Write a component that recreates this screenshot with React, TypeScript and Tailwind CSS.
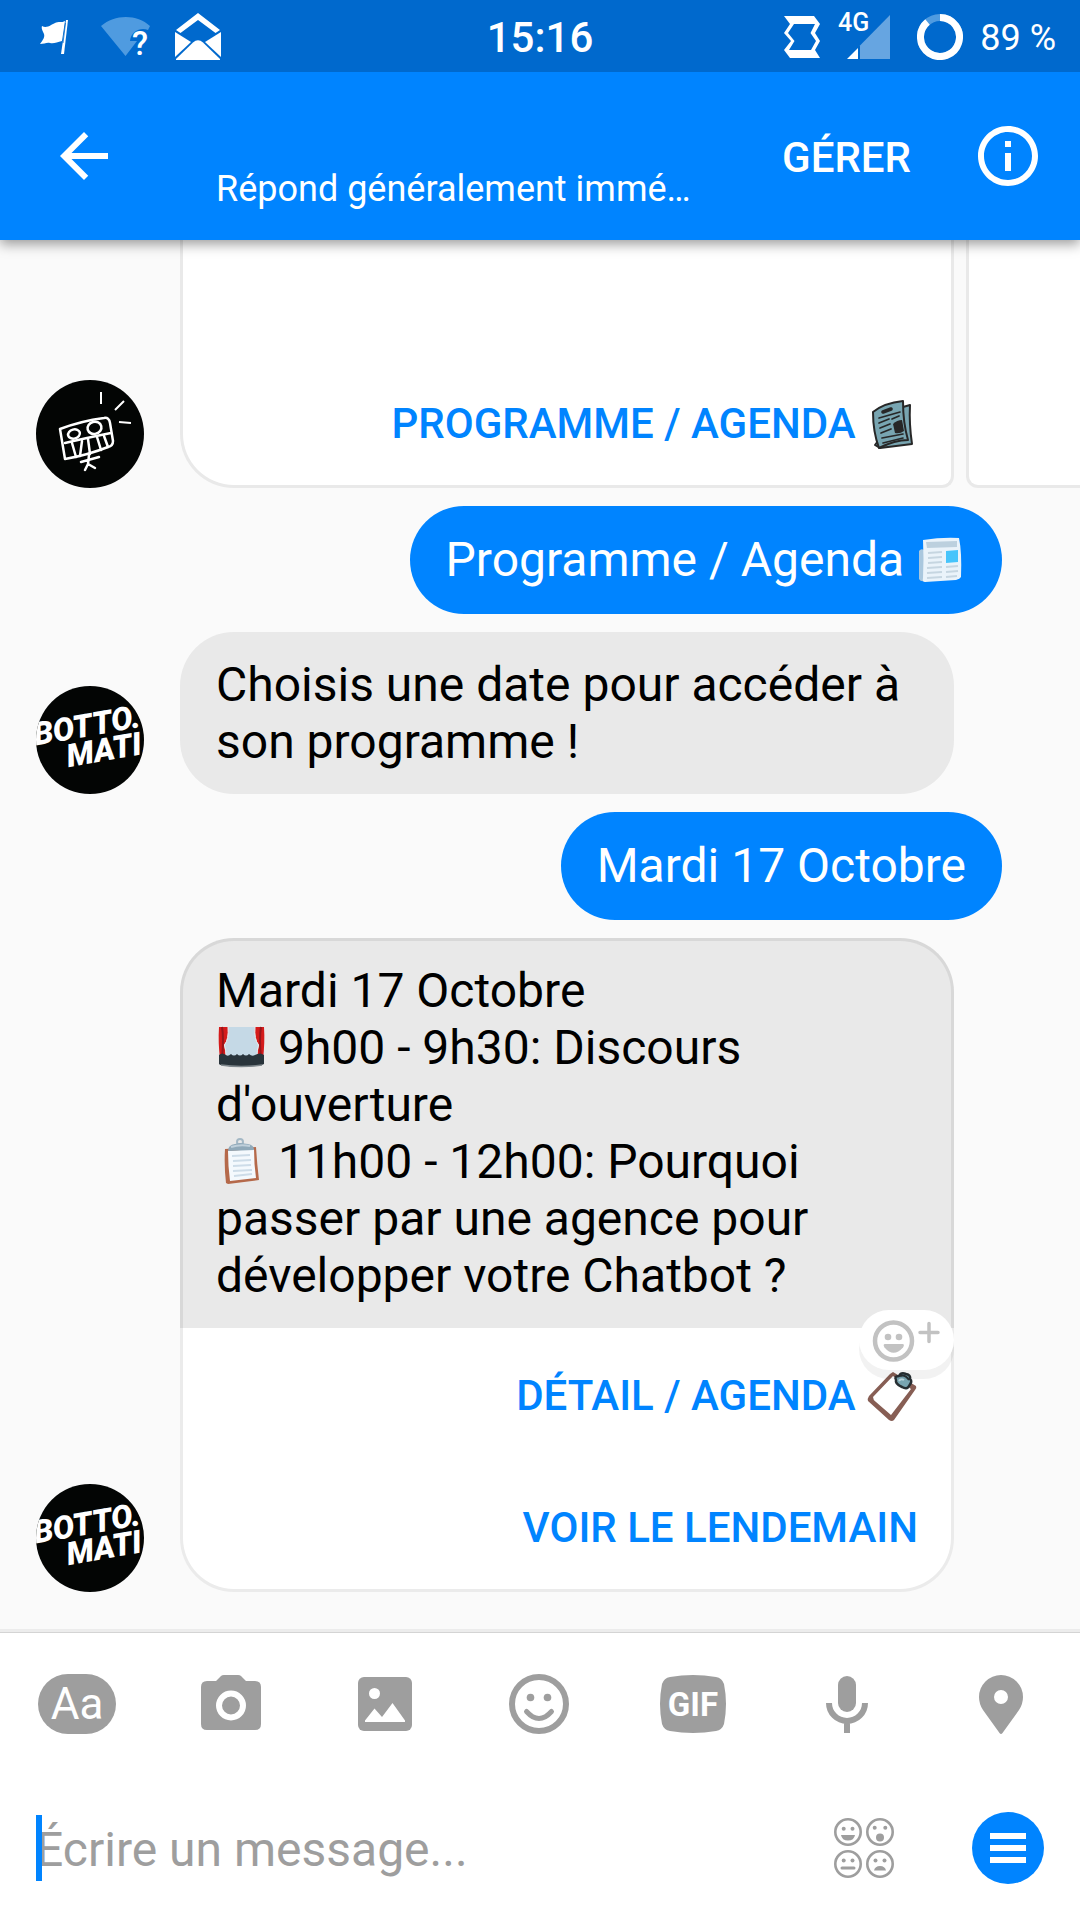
import type { ReactNode } from "react";

/* ---------- Status bar icons ---------- */

function FlagIcon() {
  return (
    <svg className="h-[36px] w-[28px]" viewBox="0 0 28 36" fill="#fff" aria-hidden="true">
      <path d="M2 7 C7 10 12 5 15 4 C18 2 22 4 25 2 L22 22 C17 23 14 25 10 24 C7 23 4 25 0 25 C3 21 5 18 4 15 C3 12 1 10 2 7Z" />
      <path d="M26 1 L28 1 L24 35 L21 35Z" />
      <path d="M25.500 4 L23 24" stroke="#0069cd" strokeWidth="0.8" />
    </svg>
  );
}

function WifiUnknownIcon() {
  return (
    <svg className="h-[40px] w-[50px] overflow-visible" viewBox="0 0 50 40" aria-hidden="true">
      <path
        d="M0 9 C14 -3 36 -3 49 9 L47 13 C40 10 30 14 29 24 H36 L24.500 39Z"
        fill="#4f9be0"
      />
      <text x="31" y="38" fontFamily="Roboto, sans-serif" fontSize="33" fontWeight="500" fill="#fff">
        ?
      </text>
    </svg>
  );
}

function OpenMailIcon() {
  return (
    <svg className="h-[48px] w-[46px]" viewBox="0 0 46 48" fill="#fff" aria-hidden="true">
      <path d="M23 0 L45 17 L40.500 20 L23 7 L5.500 20 L1 17Z" />
      <path d="M0 19 L16 29 L0 44Z" />
      <path d="M46 19 L30 29 L46 44Z" />
      <path d="M1 46 L18 29.500 Q23 25 28 29.500 L45 46 V47 H1Z" />
    </svg>
  );
}

function HourglassIcon() {
  return (
    <svg className="h-[42px] w-[36px]" viewBox="0 0 36 42" fill="#fff" aria-hidden="true">
      <path
        fillRule="evenodd"
        d="M0 0 H30 L36 8 L31 17 L36 25 L31 34 L36 42 H6 L0 34 L7 25 L0 17 L6 8Z M10 8 L4 17 L10.500 25 L5 34 H27 L32 25 L26.500 17 L31 8Z"
      />
    </svg>
  );
}

function SignalIcon() {
  return (
    <svg className="h-[46px] w-[52px] overflow-visible" viewBox="0 0 52 46" aria-hidden="true">
      <path d="M52 1 V45 H22 V31.500Z" fill="#66a5e1" />
      <path d="M20 34 V45 H9Z" fill="#fff" />
      <text x="0" y="17" fontFamily="Roboto, sans-serif" fontSize="25" fontWeight="500" fill="#fff">
        4G
      </text>
    </svg>
  );
}

function BatteryRing() {
  return (
    <svg className="h-[46px] w-[46px]" viewBox="0 0 46 46" fill="none" strokeWidth="7" aria-hidden="true">
      <circle cx="23" cy="23" r="19.500" stroke="#4f9be0" />
      <path d="M23 3.500 A19.500 19.500 0 1 1 10.500 8" stroke="#fff" />
    </svg>
  );
}

/* ---------- Emoji ---------- */

function InkNewspaper() {
  return (
    <svg className="inline h-[52px] w-[52px] align-[-12px]" viewBox="0 0 52 52" role="img" aria-label="journal" strokeLinejoin="round" strokeLinecap="round">
      <path d="M37 9 L44 7 Q43 26 46 46 L14 50 L9 47Z" fill="#78a5b1" stroke="#272727" strokeWidth="2" />
      <path d="M7 14 Q18 5 37 3 Q37 25 42 42 Q29 42 13 50 Q7 34 7 14Z" fill="#78a5b1" stroke="#272727" strokeWidth="2" />
      <path d="M17 14 L25 11" stroke="#272727" strokeWidth="3.500" />
      <path d="M13 20 L34 14 M13 25 L23 21 M14 30 L24 26 M15 35 L25 31 M16 40 L37 36 M17 45 L37 40 M26 21 L33 18" stroke="#272727" strokeWidth="1.700" />
      <path d="M27 26 Q31 22 36 22 L38 33 Q34 36 29 35Z" fill="#272727" />
    </svg>
  );
}

function InkClipboard() {
  return (
    <svg className="inline h-[52px] w-[52px] align-[-12px]" viewBox="0 0 52 52" role="img" aria-label="presse-papiers" strokeLinejoin="round">
      <path fillRule="evenodd" d="M27 2 L50 16 Q51 18 49 20 L28 50 Q26 52 23 50 L2 31 Q1 29 3 26 L24 4Z M27 6 L7 27 Q7 30 10 32 L25 45 L45 19Z" fill="#875e54" />
      <path d="M30 10 Q28 6 33 6 Q35 2 40 4 Q45 5 44 9 Q47 11 43 16 Q41 20 36 17 Q29 14 30 10Z" fill="#78a5b1" stroke="#272f33" strokeWidth="2.500" />
      <path d="M34 6 Q39 4 43 10" fill="none" stroke="#272f33" strokeWidth="2" />
      <path d="M33 11 Q35 8 38 10" fill="none" stroke="#b9d4dc" strokeWidth="2" />
    </svg>
  );
}

function ColorNewspaper() {
  return (
    <svg className="inline h-[50px] w-[50px] align-[-8px]" viewBox="0 0 50 50" role="img" aria-label="journal">
      <path d="M3 17 Q5 14 8 16 L12 46 Q5 49 3 45Z" fill="#a9c7de" />
      <path d="M7 6 Q26 3 43 4 Q46 18 45 43 Q44 45 40 46 L9 48 Q6 48 7 44 Q8 25 7 6Z" fill="#eaf3fa" />
      <path d="M10 8 L41 7 L41 13 L11 14Z" fill="#bcd0de" />
      <path d="M30 17 L42 16 L42 28 L30 29Z" fill="#46c4fb" />
      <path d="M12 19 L26 18 M12 24 L26 23 M12 29 L26 28 M11 34 L26 33 M11 39 L26 38 M11 44 L26 43 M30 33 L42 32 M30 38 L42 37 M30 43 L41 42" stroke="#c6d6e1" strokeWidth="2" />
    </svg>
  );
}

function StageEmoji() {
  return (
    <svg className="inline h-[50px] w-[50px] align-[-8px]" viewBox="0 0 50 50" role="img" aria-label="scène">
      <path d="M4 5 H48 V37 H4Z" fill="#c5d9e6" />
      <path d="M3 5 H12 Q13 17 8 23 Q10 29 10 37 H4 Q2 20 3 5Z" fill="#d41b1b" />
      <path d="M48 5 H39 Q38 17 43 23 Q41 29 41 37 H47 Q49 20 48 5Z" fill="#d41b1b" />
      <path d="M6 5 Q8 16 6 36 M45 5 Q43 16 45 36" stroke="#97151a" strokeWidth="2" fill="none" />
      <path d="M12 5 Q13 17 8.500 23 Q10 29 10 34 M39 5 Q38 17 42.500 23 Q41 29 41 34" stroke="#e9eef0" strokeWidth="1" fill="none" />
      <path d="M3 33 Q6 30 10 33 Q12 35 15 32 Q18 35 21 32 Q24 35 27 32 Q30 35 33 32 Q36 35 39 33 Q44 30 48 33 V42 Q46 44 25 45 Q4 44 3 42Z" fill="#29343b" />
      <path d="M5 43 Q25 46 46 43" stroke="#7e878c" strokeWidth="1.500" fill="none" />
    </svg>
  );
}

function ClipboardEmoji() {
  return (
    <svg className="inline h-[50px] w-[50px] align-[-8px]" viewBox="0 0 50 50" role="img" aria-label="presse-papiers">
      <path d="M9 13 L40 11 Q41 28 43 44 L12 48 L10 47 Q8 30 9 13Z" fill="#b5694a" />
      <path d="M12 15 L38 13 Q38 28 40 42 L14 45 Q12 30 12 15Z" fill="#f4f9fd" />
      <path d="M16 20 L34 19 M17 25 L35 24 M17 30 L35 29 M17 35 L36 34 M18 40 L36 38" stroke="#cddce8" strokeWidth="2" />
      <circle cx="24" cy="6" r="3" fill="none" stroke="#a4b8c5" strokeWidth="2" />
      <path d="M12 15 Q12 9 19 8 L24 7 L32 8 Q38 9 38 14Z" fill="#90a9b9" />
      <path d="M15 11 Q24 8 34 10" stroke="#c0d0db" strokeWidth="2" fill="none" />
    </svg>
  );
}

/* ---------- Avatars ---------- */

function RobotAvatar() {
  return (
    <svg className="size-[108px] shrink-0" viewBox="0 0 108 108" role="img" aria-label="Robot" fill="none" stroke="#fff" strokeWidth="2.500" strokeLinecap="round" strokeLinejoin="round">
      <circle cx="54" cy="54" r="54" fill="#030504" stroke="none" />
      <path d="M24 49 Q45 41 68 38 Q73 37 74 43 L77 61 Q77 66 72 67 Q52 75 29 79Z" />
      <path d="M29 63 Q50 58 75 53" />
      <path d="M36 63 L40 77 M46 61 L44 76 M52 59 L54 74 M61 57 L65 70 M68 56 L72 67" />
      <ellipse cx="38" cy="54" rx="6" ry="4.500" transform="rotate(-15 38 54)" />
      <ellipse cx="58.500" cy="48" rx="7" ry="6" transform="rotate(-15 58 48)" />
      <path d="M53 75 L52 84 L49 90 M52 84 L59 88 M45 82 L63 77" />
      <path d="M65 12 V24 M88 21 L79 30 M83 42 L95 43" strokeLinecap="butt" strokeWidth="2" />
    </svg>
  );
}

function BottoAvatar() {
  return (
    <div className="size-[108px] shrink-0 overflow-hidden rounded-full bg-[#030504]">
      <svg className="size-full" viewBox="0 0 108 108" role="img" aria-label="Bottomatin" fill="#fff" fontFamily="Roboto, sans-serif" fontWeight="900" fontStyle="italic" fontSize="32">
        <g transform="rotate(-10 54 54)">
          <text x="-1" y="50">BOTTO.</text>
          <text x="28" y="77">MATI.</text>
        </g>
      </svg>
    </div>
  );
}

/* ---------- Composer icons ---------- */

const GREY = "#9e9e9e";

function CameraIcon() {
  return (
    <svg className="size-[60px]" viewBox="0 0 60 60" aria-hidden="true">
      <path d="M6 7 H15 L20 2 Q21 1 23 1 H37 Q39 1 40 2 L45 7 H54 Q60 7 60 13 V50 Q60 56 54 56 H6 Q0 56 0 50 V13 Q0 7 6 7Z" fill={GREY} />
      <circle cx="30" cy="31.500" r="12" fill={GREY} stroke="#fff" strokeWidth="6" />
    </svg>
  );
}

function PhotoIcon() {
  return (
    <svg className="size-[54px]" viewBox="0 0 54 54" aria-hidden="true">
      <rect width="54" height="54" rx="6" fill={GREY} />
      <circle cx="16.500" cy="16.500" r="5.500" fill="#fff" />
      <path d="M7 45 V43.500 L16.500 31.500 L24 40 L34.500 26 L47 43.500 V45Z" fill="#fff" />
    </svg>
  );
}

function SmileIcon() {
  return (
    <svg className="size-[60px]" viewBox="0 0 60 60" aria-hidden="true">
      <circle cx="30" cy="30" r="27" fill="none" stroke={GREY} strokeWidth="6" />
      <circle cx="21.500" cy="23.500" r="3.800" fill={GREY} />
      <circle cx="38.500" cy="23.500" r="3.800" fill={GREY} />
      <path d="M17.500 37.500 Q30 51.500 42.500 37.500" fill="none" stroke={GREY} strokeWidth="5" strokeLinecap="round" />
    </svg>
  );
}

function GifIcon() {
  return (
    <svg className="h-[58px] w-[66px]" viewBox="0 0 66 58" aria-hidden="true">
      <path d="M10 2 Q33 -2 56 2 Q62 3 64 9 Q68 29 64 49 Q62 55 56 56 Q33 60 10 56 Q4 55 2 49 Q-2 29 2 9 Q4 3 10 2Z" fill={GREY} />
      <text x="33" y="41" textAnchor="middle" fontFamily="Roboto, sans-serif" fontWeight="700" fontSize="33" fill="#fff">
        GIF
      </text>
    </svg>
  );
}

function MicIcon() {
  return (
    <svg className="h-[58px] w-[42px]" viewBox="0 0 42 58" aria-hidden="true">
      <rect x="12" y="1" width="18" height="36" rx="9" fill={GREY} />
      <path d="M3 28 A18 18 0 0 0 39 28 M21 46 V58" fill="none" stroke={GREY} strokeWidth="6" />
    </svg>
  );
}

function PinIcon() {
  return (
    <svg className="h-[60px] w-[44px]" viewBox="0 0 44 60" aria-hidden="true">
      <path fillRule="evenodd" d="M22 1 A22 22 0 0 1 44 23 Q44 30 40 36 L23.500 59 Q22 61 20.500 59 L4 36 Q0 30 0 23 A22 22 0 0 1 22 1Z M22 16 A7 7 0 1 0 22 30 A7 7 0 1 0 22 16Z" fill={GREY} />
    </svg>
  );
}

function FacesIcon() {
  return (
    <svg className="size-[60px]" viewBox="0 0 60 60" fill={GREY} aria-hidden="true">
      <g fill="none" stroke={GREY} strokeWidth="2.600">
        <circle cx="14" cy="14" r="12.700" />
        <circle cx="46" cy="14" r="12.700" />
        <circle cx="14" cy="46" r="12.700" />
        <circle cx="46" cy="46" r="12.700" />
      </g>
      <circle cx="9.700" cy="10.700" r="2" />
      <circle cx="18.500" cy="10.700" r="2" />
      <path d="M7 17 H21 Q20 22.500 14 22.500 Q8 22.500 7 17Z" />
      <circle cx="40.700" cy="9.700" r="2" />
      <circle cx="51.300" cy="9.700" r="2" />
      <circle cx="46" cy="19.500" r="4" />
      <circle cx="9.700" cy="42.500" r="2" />
      <circle cx="18.500" cy="42.500" r="2" />
      <rect x="6.500" y="48.500" width="15" height="3" rx="1.500" />
      <circle cx="41.500" cy="42.500" r="2" />
      <circle cx="50.500" cy="42.500" r="2" />
      <path d="M40 52.500 Q41 48 46 48 Q51 48 52 52.500Z" />
    </svg>
  );
}

/* ---------- Messages ---------- */

function Outgoing({ children }: { children: ReactNode }) {
  return (
    <div className="flex justify-end pr-[78px]">
      <p className="flex min-h-[108px] items-center rounded-[54px] bg-[#0084ff] px-9 pb-[2px] text-[48px] leading-[57px] text-white">
        <span>{children}</span>
      </p>
    </div>
  );
}

function Incoming({ avatar, children }: { avatar: ReactNode; children: ReactNode }) {
  return (
    <div className="flex items-end gap-9 pr-[126px] pl-9">
      {avatar}
      <div className="relative min-w-0 flex-1">{children}</div>
    </div>
  );
}

function CardButton({ children }: { children: ReactNode }) {
  return (
    <button type="button" className="flex h-[132px] w-full items-center justify-end px-[33px] pt-[4px] text-right text-[42px] leading-[56px] font-medium text-[#0084ff]">
      <span>{children}</span>
    </button>
  );
}

function Tool({ label, children }: { label: string; children: ReactNode }) {
  return (
    <button type="button" aria-label={label} className="flex h-full flex-1 items-center justify-center">
      {children}
    </button>
  );
}

export default function App() {
  return (
    <div className="flex min-h-screen flex-col bg-[#fafafa] font-['Roboto',sans-serif] text-black">
      <div className="relative z-20 grid h-[72px] grid-cols-[1fr_auto_1fr] items-center bg-[#0069cd] pt-[2px] text-white">
        <div className="flex items-center pl-10">
          <FlagIcon />
          <span className="ml-[33px] flex"><WifiUnknownIcon /></span>
          <span className="ml-6 flex"><OpenMailIcon /></span>
        </div>
        <time className="pt-[2px] text-[42px] leading-[56px] font-medium">15:16</time>
        <div className="flex items-center justify-end pr-6">
          <HourglassIcon />
          <span className="ml-[18px] flex"><SignalIcon /></span>
          <span className="mr-[17px] ml-[27px] flex"><BatteryRing /></span>
          <span className="pt-[2px] text-[36px] leading-[42px]">89 %</span>
        </div>
      </div>

      <header className="relative z-10 flex h-[168px] items-center bg-[#0084ff] pr-9 pl-12 text-white shadow-[0_4px_12px_rgba(0,0,0,0.4)]">
        <button type="button" aria-label="Retour" className="mr-24">
          <svg className="size-[72px]" viewBox="0 0 24 24" fill="#fff" aria-hidden="true">
            <path d="M20 11H7.830l5.590-5.590L12 4l-8 8 8 8 1.410-1.410L7.830 13H20v-2z" />
          </svg>
        </button>
        <div className="flex h-full min-w-0 flex-1 flex-col justify-end pb-[30px]">
          <p className="truncate text-[36px] leading-[42px]">Répond généralement immé…</p>
        </div>
        <button type="button" className="mr-[61px] pt-[4px] text-[42px] leading-[56px] font-medium">GÉRER</button>
        <button type="button" aria-label="Informations">
          <svg className="size-[72px]" viewBox="0 0 24 24" fill="#fff" aria-hidden="true">
            <path d="M11 7h2v2h-2zm0 4h2v6h-2zm1-9C6.480 2 2 6.480 2 12s4.480 10 10 10 10-4.480 10-10S17.520 2 12 2zm0 18c-4.410 0-8-3.590-8-8s3.590-8 8-8 8 3.590 8 8-3.590 8-8 8z" />
          </svg>
        </button>
      </header>

      <main className="flex flex-1 flex-col gap-[18px] overflow-hidden pb-[37px]">
        <div className="flex items-end gap-9 pl-9">
          <RobotAvatar />
          <div className="flex min-w-0 flex-1 gap-3 overflow-hidden">
            <div className="h-[248px] w-[calc(100%-126px)] shrink-0 rounded-br-xl rounded-bl-[54px] border-x-3 border-b-3 border-[#e9e9e9] bg-white pt-[116px]">
              <CardButton>
                PROGRAMME / AGENDA <InkNewspaper />
              </CardButton>
            </div>
            <div className="h-[248px] w-[calc(100%-126px)] shrink-0 rounded-b-xl border-x-3 border-b-3 border-[#e9e9e9] bg-white" />
          </div>
        </div>

        <Outgoing>
          Programme / Agenda <ColorNewspaper />
        </Outgoing>

        <Incoming avatar={<BottoAvatar />}>
          <p className="rounded-[54px] bg-[#e9e9e9] px-9 py-6 text-[48px] leading-[57px]">
            Choisis une date pour accéder à son programme !
          </p>
        </Incoming>

        <Outgoing>Mardi 17 Octobre</Outgoing>

        <Incoming avatar={<BottoAvatar />}>
          <div className="relative rounded-t-[54px] border-x-3 border-t-3 border-[#d8d8d8] bg-[#e9e9e9] px-[33px] pt-[21px] pb-6 text-[48px] leading-[57px]">
            <p>Mardi 17 Octobre</p>
            <p>
              <StageEmoji /> 9h00 - 9h30: Discours d'ouverture
            </p>
            <p>
              <ClipboardEmoji /> 11h00 - 12h00: Pourquoi passer par une agence pour développer votre Chatbot ?
            </p>
            <button
              type="button"
              aria-label="Ajouter une réaction"
              className="absolute -right-[3px] -bottom-[42px] flex h-[60px] w-[95px] items-center justify-center rounded-full bg-white shadow-[0_9px_0_rgba(0,0,0,0.05)]"
            >
              <svg className="h-[60px] w-[95px]" viewBox="0 0 95 60" fill="#c2c2c2" aria-hidden="true">
                <circle cx="34.500" cy="31" r="18.500" fill="none" stroke="#c2c2c2" strokeWidth="4.500" />
                <circle cx="29" cy="27" r="3.300" />
                <circle cx="40" cy="27" r="3.300" />
                <path d="M26 34 H43.500 Q46 34 44 37.500 Q34.500 48 25.500 37.500 Q23.500 34 26 34Z" />
                <path d="M70 13.500 V31.500 M61 22.500 H79" stroke="#c2c2c2" strokeWidth="3.500" strokeLinecap="round" />
              </svg>
            </button>
          </div>
          <div className="h-[264px] rounded-b-[54px] border-x-3 border-b-3 border-[#ebebeb] bg-white">
            <CardButton>
              DÉTAIL / AGENDA <InkClipboard />
            </CardButton>
            <CardButton>VOIR LE LENDEMAIN</CardButton>
          </div>
        </Incoming>
      </main>

      <footer className="border-t-3 border-[#ececec] bg-white">
        <div className="flex h-[144px] border-t border-[#d4d4d4] pr-[2px] pb-[2px]">
          <Tool label="Texte">
            <span className="flex h-[60px] w-[78px] items-center justify-center rounded-full bg-[#9e9e9e] text-[44px] leading-[56px] text-white">
              Aa
            </span>
          </Tool>
          <Tool label="Appareil photo"><CameraIcon /></Tool>
          <Tool label="Galerie"><PhotoIcon /></Tool>
          <Tool label="Autocollants"><SmileIcon /></Tool>
          <Tool label="GIF"><GifIcon /></Tool>
          <Tool label="Message vocal"><MicIcon /></Tool>
          <Tool label="Position"><PinIcon /></Tool>
        </div>
        <div className="flex h-[144px] items-center pr-9 pl-9">
          <div className="relative flex min-w-0 flex-1 items-center">
            <input
              type="text"
              aria-label="Écrire un message"
              placeholder="Écrire un message..."
              className="h-[66px] w-full bg-transparent pt-[2px] text-[48px] leading-[57px] outline-none placeholder:text-[#9e9e9e]"
            />
            <span className="absolute inset-y-0 left-0 w-[6px] bg-[#0084ff]" />
          </div>
          <button type="button" aria-label="Émojis" className="mr-[78px]">
            <FacesIcon />
          </button>
          <button type="button" aria-label="Menu" className="flex size-[72px] flex-col items-center justify-center gap-[6px] rounded-full bg-[#0084ff]">
            <span className="h-[6px] w-9 bg-white" />
            <span className="h-[6px] w-9 bg-white" />
            <span className="h-[6px] w-9 bg-white" />
          </button>
        </div>
      </footer>
    </div>
  );
}
